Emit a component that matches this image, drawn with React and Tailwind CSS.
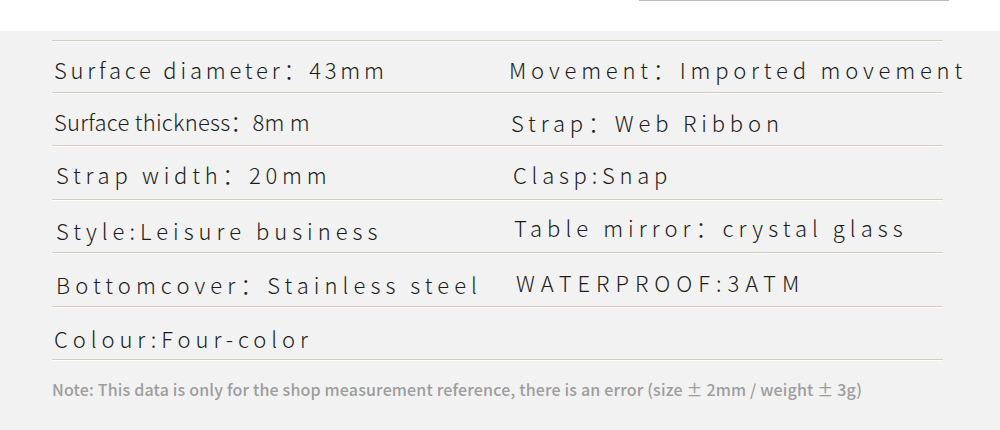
import React from 'react';

// h = row height below each rule, pt = per-cell top padding to sit on the photographed baseline
const specs = [
  {
    h: 'h-[50px]',
    cells: [
      { text: 'Surface diameter：43mm', cls: 'pt-[16px] pl-[2px] tracking-[3.8px]' },
      { text: 'Movement：Imported movement', cls: 'pt-[16px] pl-0 tracking-[4.8px]' },
    ],
  },
  {
    h: 'h-[51px]',
    cells: [
      { text: 'Surface thickness：8m m', cls: 'pt-[16px] pl-[2px] tracking-[0.23px]' },
      { text: 'Strap：Web Ribbon', cls: 'pt-[17px] pl-[2px] tracking-[4.85px]' },
    ],
  },
  {
    h: 'h-[52px]',
    cells: [
      { text: 'Strap width：20mm', cls: 'pt-[16px] pl-[4px] tracking-[4.75px]' },
      { text: 'Clasp:Snap', cls: 'pt-[16px] pl-[4px] tracking-[4.75px]' },
    ],
  },
  {
    h: 'h-[51px]',
    cells: [
      { text: 'Style:Leisure business', cls: 'pt-[18px] pl-[4px] tracking-[5px]' },
      { text: 'Table mirror：crystal glass', cls: 'pt-[15px] pl-[5px] tracking-[5.05px]' },
    ],
  },
  {
    h: 'h-[52px]',
    cells: [
      { text: 'Bottomcover：Stainless steel', cls: 'pt-[19px] pl-[4px] tracking-[5.05px]' },
      { text: 'WATERPROOF:3ATM', cls: 'pt-[17px] pl-[7px] tracking-[6px]' },
    ],
  },
  {
    h: 'h-[51px]',
    cells: [
      { text: 'Colour:Four-color', cls: 'pt-[19px] pl-[2px] tracking-[4.9px]' },
      { text: '', cls: '' },
    ],
  },
];

const Rule = () => (
  <div className="flex flex-col">
    <div className="h-px bg-[#d8ccbe]" />
    <div className="h-px bg-white" />
  </div>
);

export default function App() {
  return (
    <div className="w-[1000px] h-[430px] bg-white font-['Noto_Sans_CJK_SC','Noto_Sans',sans-serif] overflow-hidden">
      {/* top strip */}
      <div className="h-[31px] pl-[639px]">
        <div className="w-[310px] h-px bg-[#bcbcbc]" />
      </div>

      {/* spec table */}
      <div className="h-[399px] bg-[#f2f2f2] pt-[9px] pl-[52px]">
        <div className="w-[891px]">
          <Rule />
          {specs.map((row, i) => (
            <div key={i}>
              <div className={`${row.h} grid grid-cols-[457px_1fr]`}>
                {row.cells.map((cell, j) => (
                  <div
                    key={j}
                    className={`text-[22px] leading-[22px] font-light text-[#1c1c1c] whitespace-nowrap ${cell.cls}`}
                  >
                    {cell.text}
                  </div>
                ))}
              </div>
              <Rule />
            </div>
          ))}
          <p className="mt-[20px] text-[16px] leading-[16px] font-medium tracking-[0.17px] text-[#9d9d9d] whitespace-nowrap">
            Note: This data is only for the shop measurement reference, there is an error (size ± 2mm / weight ± 3g)
          </p>
        </div>
      </div>
    </div>
  );
}
